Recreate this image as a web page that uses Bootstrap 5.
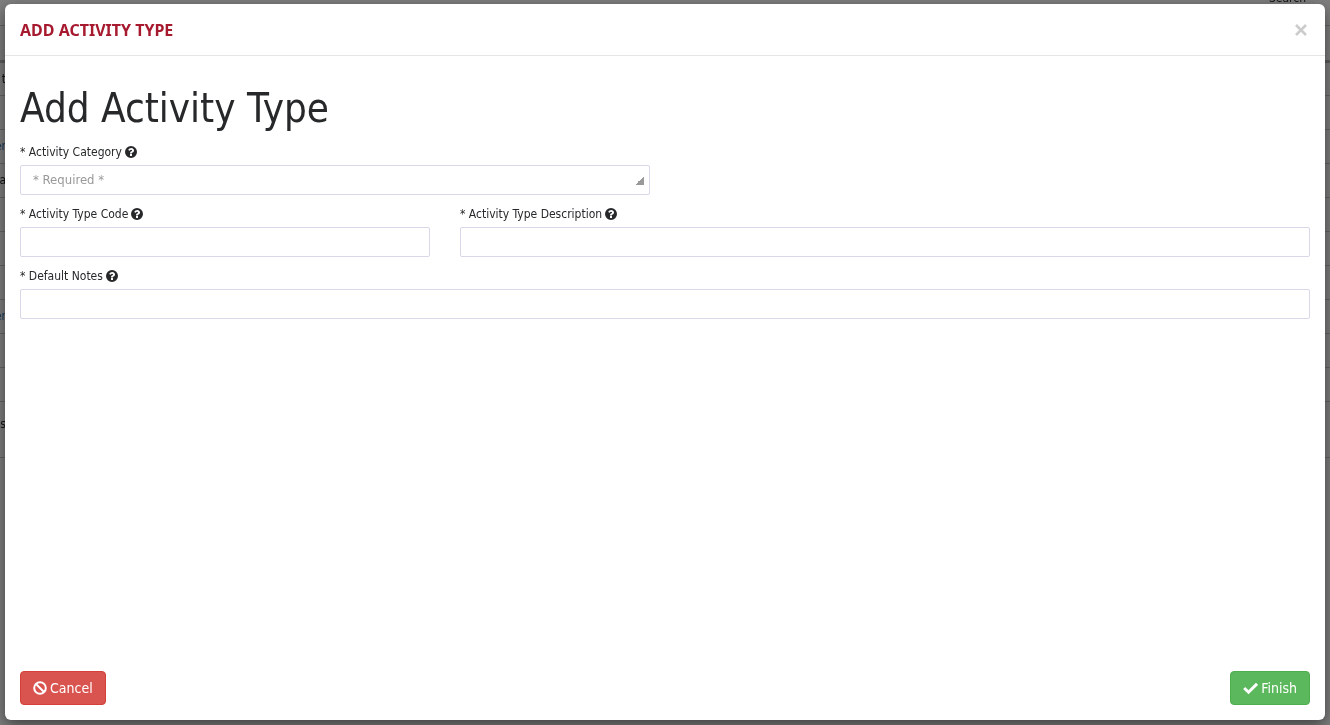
<!DOCTYPE html>
<html lang="en">
<head>
<meta charset="utf-8">
<meta name="viewport" content="width=device-width, initial-scale=1">
<title>Add Activity Type</title>
<link href="https://cdn.jsdelivr.net/npm/bootstrap@5.3.0/dist/css/bootstrap.min.css" rel="stylesheet">
<style>
body { font-family: "DejaVu Sans Condensed", "DejaVu Sans", sans-serif; font-stretch: condensed; font-size: 12px; color: #26282a; overflow: hidden; background: #fff; }
/* list page underneath the dialog */
.page-under { position: fixed; inset: 0; overflow: hidden; }
.list-head { height: 26px; border-bottom: 1px solid #ccc; padding-right: 24px; line-height: 16px; }
.list-head label { margin-top: -10px; }
.list-rows { table-layout: fixed; }
.list-rows td { height: 34px; padding: 0; border-bottom: 1px solid #ccc; vertical-align: middle; }
.list-rows tr:first-child td { height: 35px; border-bottom: 3px solid #bbb; }
.list-rows .name-col { width: 6px; overflow: hidden; white-space: nowrap; }
.list-rows .name-text { display: flex; justify-content: flex-end; color: #337ab7; }
.list-rows .plain { color: #26282a; }
.list-rows .tall td { height: 56px; padding-bottom: 10px; }
.shade { position: fixed; inset: 0; background: rgba(0,0,0,.5); }
/* dialog */
.dialog-wrap { position: relative; min-height: 100vh; padding: 4px 5px 5px; }
.dialog-box { border: 0; border-radius: 6px; background: #fff; box-shadow: 0 5px 15px rgba(0,0,0,.5); }
.dialog-box .modal-header { height: 52px; padding: 0 15px; border-bottom: 1px solid #e5e5e5; }
.dialog-box .modal-title { font-family: "Noto Sans", sans-serif; font-size: 16px; line-height: 20px; font-weight: 700; color: #a6192e; }
.dialog-box .modal-body { padding: 30px 15px 0; }
.dialog-box .modal-footer { padding: 15px; border: 0; }
.dialog-box .modal-footer > * { margin: 0; }
.close-x { border: 0; background: none; padding: 0; width: 18px; height: 18px; color: #ccc; display: flex; align-items: center; justify-content: center; }
h1 { font-size: 40px; line-height: 44px; font-weight: 400; margin: 0 0 13px; }
.row { --bs-gutter-x: 30px; }
.field { margin-bottom: 10px; }
.field label { display: flex; align-items: center; gap: 3px; line-height: 18px; margin-bottom: 4px; }
.field .form-control, .field .form-select { height: 30px; font-size: 13px; border: 1px solid #d8d8e8; border-radius: 2px; padding: 0 12px; background-color: #fff; }
.field .form-select { color: #999; background-image: linear-gradient(135deg, transparent 50%, #999 50%); background-size: 9px 9px; background-position: right 5px center; }
.btn-act { height: 34px; padding: 0 12px; font-size: 14px; line-height: 20px; border-radius: 4px; color: #fff; display: flex; align-items: center; gap: 3px; }
.btn-cancel, .btn-cancel:hover { background: #d9534f; border-color: #d43f3a; color: #fff; }
.btn-finish, .btn-finish:hover { background: #5cb85c; border-color: #4cae4c; color: #fff; }
</style>
</head>
<body>
<svg class="d-none">
  <symbol id="help" viewBox="0 0 1536 1536"><path fill-rule="evenodd" d="M768 0a768 768 0 1 1 0 1536a768 768 0 1 1 0-1536zM896 1248v-192q0-14-9-23t-23-9H672q-14 0-23 9t-9 23v192q0 14 9 23t23 9h192q14 0 23-9t9-23zM1152 576q0-88-55.500-163T958 297t-170-41q-243 0-371 213q-15 24 8 42l132 100q7 6 19 6q16 0 25-12q53-68 86-92q34-24 86-24q48 0 85.500 26t37.500 59q0 38-20 61t-68 45q-63 28-115.500 86.500T640 892v36q0 14 9 23t23 9h192q14 0 23-9t9-23q0-19 21.500-49.500T972 829q32-18 49-28.500t46-35t44.500-48t28-60.500t12.500-81z"/></symbol>
</svg>

<div class="page-under" aria-hidden="true">
  <div class="list-head d-flex justify-content-end"><label>Search</label></div>
  <table class="list-rows w-100">
    <tbody>
      <tr><td class="name-col"></td><td></td></tr>
      <tr><td class="name-col"><span class="name-text plain">t</span></td><td></td></tr>
      <tr><td></td><td></td></tr>
      <tr><td class="name-col"><span class="name-text">er</span></td><td></td></tr>
      <tr><td class="name-col"><span class="name-text plain">a</span></td><td></td></tr>
      <tr><td></td><td></td></tr>
      <tr><td></td><td></td></tr>
      <tr><td></td><td></td></tr>
      <tr><td class="name-col"><span class="name-text">er</span></td><td></td></tr>
      <tr><td></td><td></td></tr>
      <tr><td></td><td></td></tr>
      <tr class="tall"><td class="name-col"><span class="name-text plain">es</span></td><td></td></tr>
    </tbody>
  </table>
</div>
<div class="shade"></div>

<div class="dialog-wrap d-flex">
  <form class="modal-content dialog-box flex-grow-1 h-auto" role="dialog" aria-labelledby="dlgTitle" onsubmit="return false">
    <div class="modal-header">
      <h4 class="modal-title" id="dlgTitle">ADD ACTIVITY TYPE</h4>
      <button type="button" class="close-x" aria-label="Close"><svg width="12" height="12" viewBox="0 0 12 12"><path d="M1 1l10 10M11 1L1 11" stroke="currentColor" stroke-width="2.600"/></svg></button>
    </div>
    <div class="modal-body">
      <h1>Add Activity Type</h1>
      <div class="row">
        <div class="col-6 field">
          <label for="category">* Activity Category <svg width="12" height="12" fill="currentColor"><use href="#help"/></svg></label>
          <select id="category" class="form-select"><option>* Required *</option></select>
        </div>
      </div>
      <div class="row">
        <div class="col-4 field">
          <label for="code">* Activity Type Code <svg width="12" height="12" fill="currentColor"><use href="#help"/></svg></label>
          <input id="code" type="text" class="form-control">
        </div>
        <div class="col-8 field">
          <label for="desc">* Activity Type Description <svg width="12" height="12" fill="currentColor"><use href="#help"/></svg></label>
          <input id="desc" type="text" class="form-control">
        </div>
      </div>
      <div class="row">
        <div class="col-12 field">
          <label for="notes">* Default Notes <svg width="12" height="12" fill="currentColor"><use href="#help"/></svg></label>
          <input id="notes" type="text" class="form-control">
        </div>
      </div>
    </div>
    <div class="modal-footer justify-content-between">
      <button type="button" class="btn btn-act btn-cancel"><svg width="14" height="14" viewBox="0 0 14 14" fill="none" stroke="currentColor" stroke-width="2"><circle cx="7" cy="7" r="5.800"/><path d="M3 3l8 8"/></svg>Cancel</button>
      <button type="submit" class="btn btn-act btn-finish"><svg width="15" height="14" viewBox="0 0 15 14"><path d="M1.200 7l4.300 4.200L14 2.800" fill="none" stroke="currentColor" stroke-width="3"/></svg>Finish</button>
    </div>
  </form>
</div>
<script src="https://cdn.jsdelivr.net/npm/bootstrap@5.3.0/dist/js/bootstrap.bundle.min.js"></script>
</body>
</html>
